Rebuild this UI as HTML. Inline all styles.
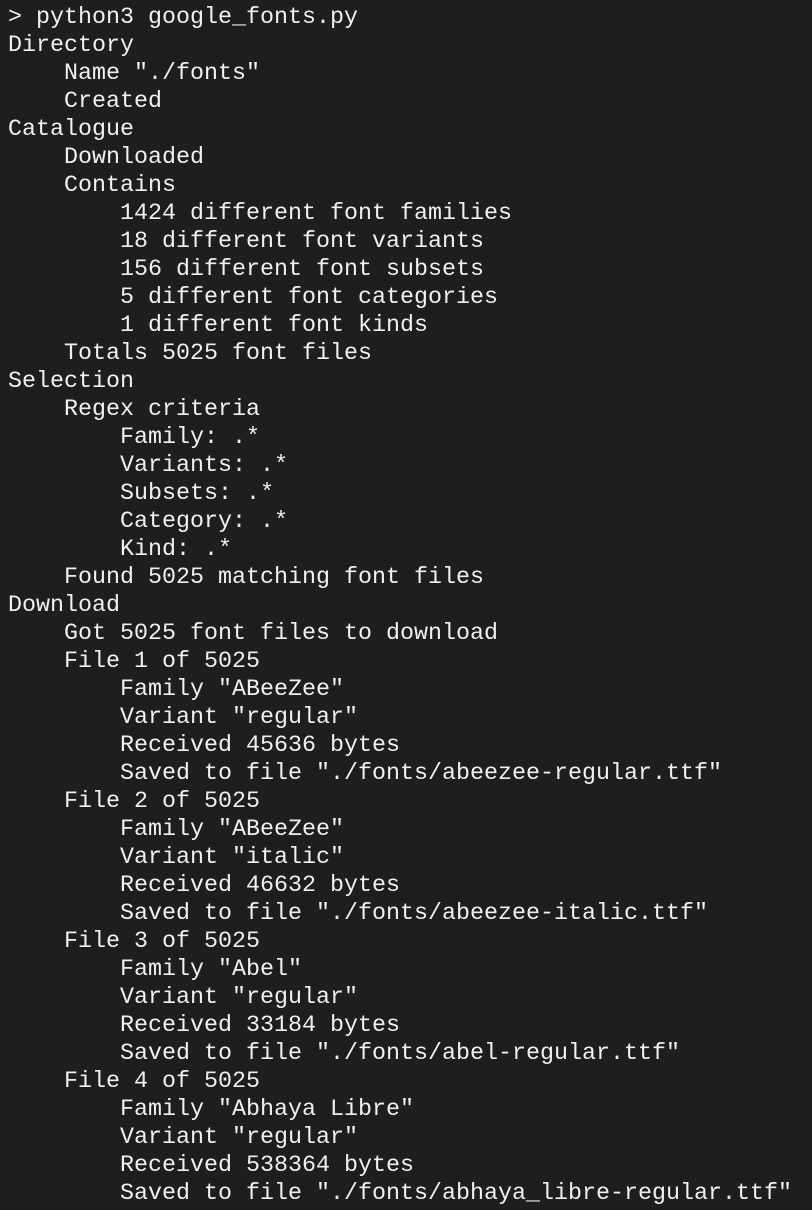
<!DOCTYPE html>
<html><head><meta charset="utf-8"><style>
html,body{margin:0;padding:0;background:#1e1e1e;width:812px;height:1210px;overflow:hidden}
pre{margin:0;position:absolute;left:8px;top:4px;font-family:"Liberation Mono",monospace;font-size:23.33px;line-height:28px;color:#f0f0f0;white-space:pre}
</style></head><body><pre>&gt; python3 google_fonts.py
Directory
    Name "./fonts"
    Created
Catalogue
    Downloaded
    Contains
        1424 different font families
        18 different font variants
        156 different font subsets
        5 different font categories
        1 different font kinds
    Totals 5025 font files
Selection
    Regex criteria
        Family: .*
        Variants: .*
        Subsets: .*
        Category: .*
        Kind: .*
    Found 5025 matching font files
Download
    Got 5025 font files to download
    File 1 of 5025
        Family "ABeeZee"
        Variant "regular"
        Received 45636 bytes
        Saved to file "./fonts/abeezee-regular.ttf"
    File 2 of 5025
        Family "ABeeZee"
        Variant "italic"
        Received 46632 bytes
        Saved to file "./fonts/abeezee-italic.ttf"
    File 3 of 5025
        Family "Abel"
        Variant "regular"
        Received 33184 bytes
        Saved to file "./fonts/abel-regular.ttf"
    File 4 of 5025
        Family "Abhaya Libre"
        Variant "regular"
        Received 538364 bytes
        Saved to file "./fonts/abhaya_libre-regular.ttf"</pre></body></html>
